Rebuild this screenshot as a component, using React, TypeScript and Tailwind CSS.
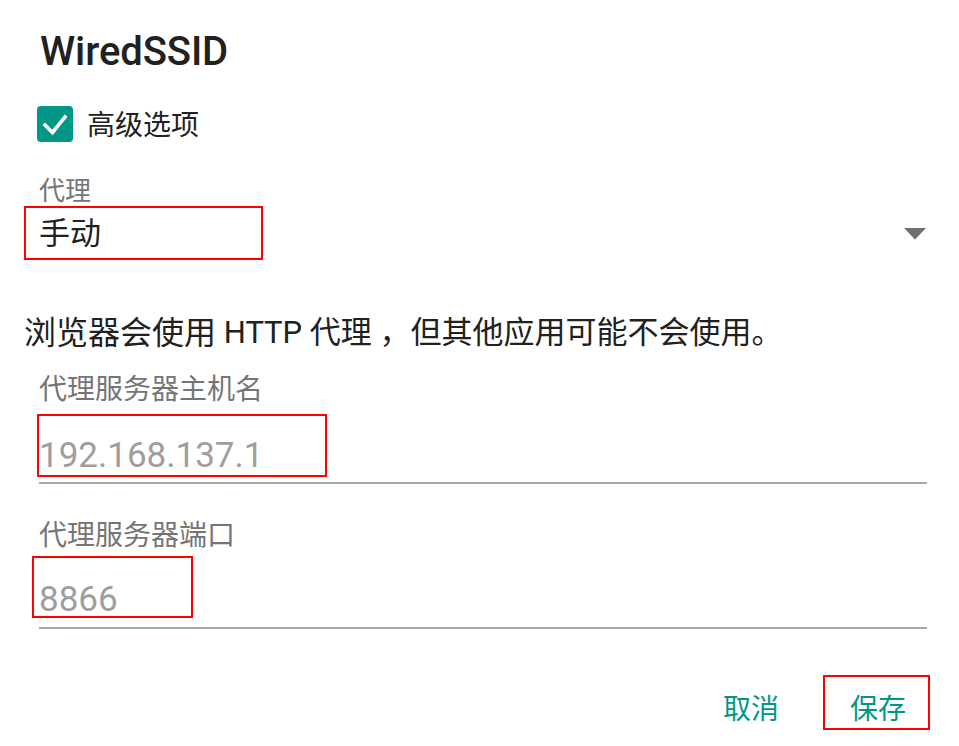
import React from "react";

function Check() {
  return (
    <svg width="36" height="36" viewBox="0 0 36 36" className="block">
      <rect x="0" y="0" width="36" height="36" rx="4" fill="#009688" />
      <path d="M8 19 L15.5 26.5 L28 11" fill="none" stroke="#ffffff" strokeWidth="3.6" strokeLinecap="square" strokeLinejoin="miter" />
    </svg>
  );
}

export default function App() {
  return (
    <div className="relative w-[959px] h-[746px] bg-white overflow-hidden font-['Roboto','Noto_Sans_CJK_SC',sans-serif] text-[#212121]">
      <div className="flex flex-col pl-[24px] pr-[32px]">
        <div className="ml-[16px] mt-[30px] h-[44px] leading-[44px] text-[40px] font-medium tracking-[-0.1px]">WiredSSID</div>

        <div className="ml-[13px] mt-[25px] h-[50px] flex items-center gap-[14px]">
          <Check />
          <span className="text-[28px] leading-[50px] pt-[3px]">高级选项</span>
        </div>

        <div className="ml-[15px] mt-[27px] h-[30px] flex items-center text-[26px] text-[#757575] leading-[30px]">代理</div>

        <div className="ml-[15px] mt-[8px] h-[40px] flex items-center justify-between">
          <span className="text-[31px] leading-[40px]">手动</span>
          <svg width="22" height="12" viewBox="0 0 22 12" className="mr-[1px]">
            <path d="M0 0 L22 0 L11 11.5 Z" fill="#707070" />
          </svg>
        </div>

        <div className="mt-[59px] h-[40px] flex items-center text-[31px] leading-[40px] whitespace-nowrap">
          <span className="text-[32px]">浏览器会使用</span>
          <span>&nbsp;HTTP 代理 ，但其他应用可能不会使用。</span>
        </div>

        <div className="ml-[15px] mt-[22px] h-[30px] flex items-center text-[28px] text-[#757575] leading-[30px]">代理服务器主机名</div>

        <div className="ml-[15px] mt-[31px] h-[40px] flex items-center text-[35px] text-[#9e9e9e] leading-[40px]">192.168.137.1</div>
        <div className="ml-[15px] mt-[6px] h-[2px] bg-[#a8a8a8]" />

        <div className="ml-[15px] mt-[37px] h-[30px] flex items-center text-[28px] text-[#757575] leading-[30px]">代理服务器端口</div>

        <div className="ml-[15px] mt-[29px] h-[40px] flex items-center text-[35px] text-[#9e9e9e] leading-[40px]">8866</div>
        <div className="ml-[15px] mt-[7px] h-[2px] bg-[#a8a8a8]" />

        <div className="mt-[61px] h-[40px] flex items-center justify-end gap-[71px] pr-[21px] text-[28px] text-[#009688] leading-[40px]">
          <span>取消</span>
          <span>保存</span>
        </div>
      </div>

      <div className="absolute left-[24px] top-[206px] w-[239px] h-[54px] border-2 border-[#ff0000]" />
      <div className="absolute left-[37px] top-[414px] w-[290px] h-[63px] border-2 border-[#ff0000]" />
      <div className="absolute left-[32px] top-[556px] w-[161px] h-[62px] border-2 border-[#ff0000]" />
      <div className="absolute left-[823px] top-[675px] w-[107px] h-[55px] border-2 border-[#ff0000]" />
    </div>
  );
}
